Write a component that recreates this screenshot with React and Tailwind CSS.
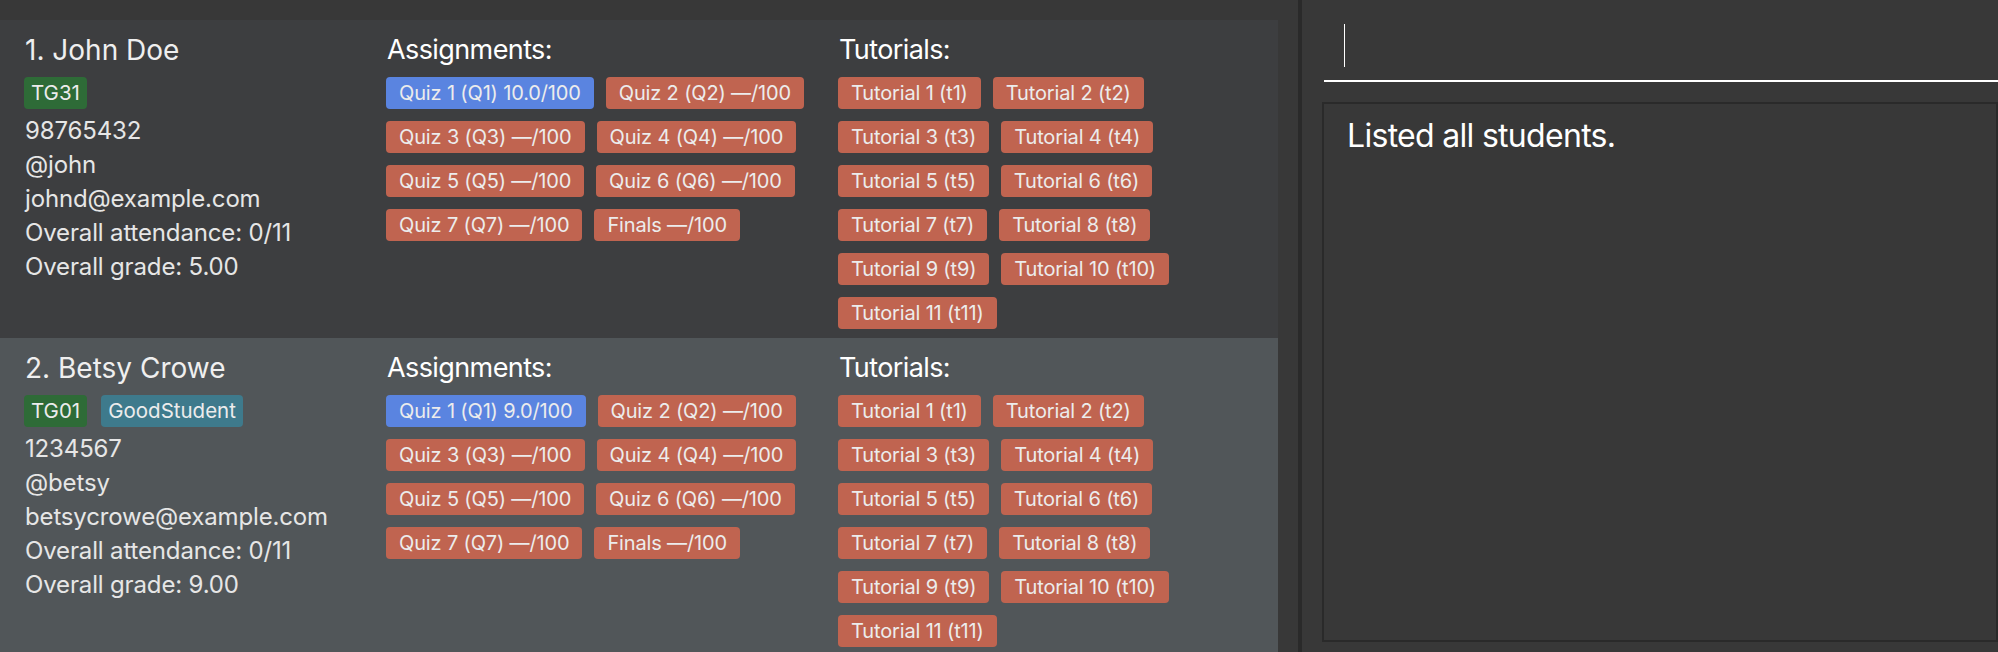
import React from "react";

const students = [
  {
    id: 1,
    name: "John Doe",
    tags: [{ label: "TG31", color: "bg-[#2e6b37]" }],
    phone: "98765432",
    handle: "@john",
    email: "johnd@example.com",
    attendance: "0/11",
    grade: "5.00",
    quiz1: "10.0",
    bg: "bg-[#3d3e40]",
  },
  {
    id: 2,
    name: "Betsy Crowe",
    tags: [
      { label: "TG01", color: "bg-[#2e6b37]" },
      { label: "GoodStudent", color: "bg-[#3e7a8c]" },
    ],
    phone: "1234567",
    handle: "@betsy",
    email: "betsycrowe@example.com",
    attendance: "0/11",
    grade: "9.00",
    quiz1: "9.0",
    bg: "bg-[#515659]",
  },
];

function assignmentsFor(s) {
  const list = [{ label: `Quiz 1 (Q1) ${s.quiz1}/100`, done: true }];
  for (let i = 2; i <= 7; i++) list.push({ label: `Quiz ${i} (Q${i}) —/100`, done: false });
  list.push({ label: "Finals —/100", done: false });
  return list;
}

const tutorials = Array.from({ length: 11 }, (_, i) => `Tutorial ${i + 1} (t${i + 1})`);

function Chip({ children, blue }) {
  return (
    <span
      className={`h-[32px] flex items-center px-[13px] rounded-[4px] text-[20px] tracking-[-0.15px] text-[#ececec] whitespace-nowrap ${
        blue ? "bg-[#5a84e0]" : "bg-[#c06450]"
      }`}
    >
      {children}
    </span>
  );
}

function StudentCard({ s }) {
  return (
    <div className={`${s.bg} flex pl-[24px] pt-[13px] pb-[9px]`}>
      <div className="w-[362px] flex flex-col">
        <div className="text-[28px] leading-[34px] text-[#efefef] pl-px">
          {s.id}. {s.name}
        </div>
        <div className="flex gap-[14px] mt-[10px]">
          {s.tags.map((t) => (
            <span
              key={t.label}
              className={`${t.color} h-[32px] flex items-center px-[7px] rounded-[4px] text-[20.5px] text-[#ececec]`}
            >
              {t.label}
            </span>
          ))}
        </div>
        <div className="mt-[5px] pl-px text-[24px] leading-[34px] text-[#e6e6e6] tracking-[-0.15px]">
          <div>{s.phone}</div>
          <div>{s.handle}</div>
          <div>{s.email}</div>
          <div>Overall attendance: {s.attendance}</div>
          <div>Overall grade: {s.grade}</div>
        </div>
      </div>
      <div className="w-[452px] flex flex-col">
        <div className="text-[27px] leading-[34px] text-white pl-px tracking-[-0.6px]">Assignments:</div>
        <div className="mt-[10px] w-[440px] flex flex-wrap gap-[12px]">
          {assignmentsFor(s).map((a) => (
            <Chip key={a.label} blue={a.done}>
              {a.label}
            </Chip>
          ))}
        </div>
      </div>
      <div className="flex flex-col">
        <div className="text-[27px] leading-[34px] text-white pl-px tracking-[-0.6px]">Tutorials:</div>
        <div className="mt-[10px] w-[380px] flex flex-wrap gap-[12px]">
          {tutorials.map((t) => (
            <Chip key={t}>{t}</Chip>
          ))}
        </div>
      </div>
    </div>
  );
}

export default function App() {
  return (
    <div
      className="w-[1998px] h-[652px] overflow-hidden bg-[#383838] flex"
      style={{ fontFamily: "Inter, 'Noto Sans', sans-serif" }}
    >
      <div className="w-[1298px] shrink-0 pt-[20px] pr-[20px] flex flex-col">
        {students.map((s) => (
          <StudentCard key={s.id} s={s} />
        ))}
      </div>
      <div className="w-[4px] shrink-0 bg-[#2a2a2a]" />
      <div className="flex-1 pl-[20px] flex flex-col">
        <div className="ml-[2px] h-[82px] border-b-2 border-white pt-[24px] pl-[20px]">
          <div className="w-px h-[43px] bg-white" />
        </div>
        <div className="mt-[20px] h-[540px] border-2 border-[#2a2a2a] pl-[23px] pt-[12px]">
          <div className="text-[32px] leading-[40px] text-white tracking-[-0.7px]">Listed all students.</div>
        </div>
      </div>
    </div>
  );
}
